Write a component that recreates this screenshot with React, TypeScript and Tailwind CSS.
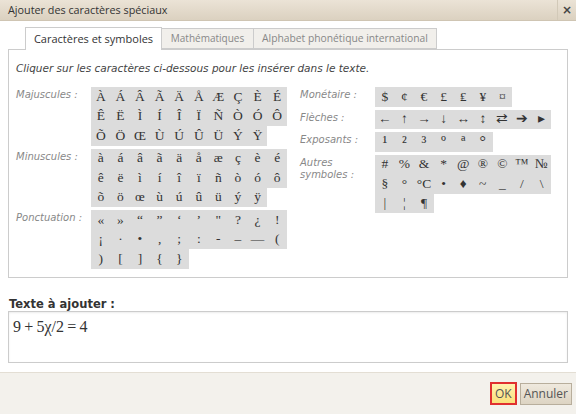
import React from 'react';

const upper = ['À','Á','Â','Ã','Ä','Å','Æ','Ç','È','É','Ê','Ë','Ì','Í','Î','Ï','Ñ','Ò','Ó','Ô','Õ','Ö','Œ','Ù','Ú','Û','Ü','Ý','Ÿ'];
const lower = ['à','á','â','ã','ä','å','æ','ç','è','é','ê','ë','ì','í','î','ï','ñ','ò','ó','ô','õ','ö','œ','ù','ú','û','ü','ý','ÿ'];
const punct = ['«','»','“','”','‘','’','"','?','¿','!','¡','·','•',',',';',':','-','–','—','(',')','[',']','{','}'];
const money = ['$','¢','€','£','₤','¥','¤'];
const arrows = ['←','↑','→','↓','↔','↕','⇄','➔','▸'];
const sup = ['¹','²','³','º','ª','°'];
const other = ['#','%','&','*','@','®','©','™','№','§','°','°C','•','♦','~','_','/','\\','|','¦','¶'];

function Grid({ chars, cols, small }: { chars: string[]; cols: number; small?: boolean }) {
  return (
    <div className="flex flex-wrap" style={{ width: cols * 19.6 }}>
      {chars.map((c, i) => (
        <span
          key={i}
          className={`w-[19.6px] h-[19.5px] bg-[#dcdcdc] flex items-center justify-center text-[#333] font-['Liberation_Serif',serif] cursor-pointer whitespace-nowrap ${small ? 'text-[16px]' : 'text-[13.5px]'}`}
        >
          {c}
        </span>
      ))}
    </div>
  );
}

function Section({ label, chars, cols, small }: { label: React.ReactNode; chars: string[]; cols: number; small?: boolean }) {
  return (
    <div className="flex">
      <div className="w-[75px] pt-[2px] text-[10px] leading-[12px] italic text-[#888]">{label}</div>
      <Grid chars={chars} cols={cols} small={small} />
    </div>
  );
}

export default function App() {
  return (
    <div className="w-[576px] h-[414px] bg-white flex flex-col font-['DejaVu_Sans',sans-serif] overflow-hidden">
      {/* Title bar */}
      <div className="h-[21px] flex items-center justify-between bg-gradient-to-b from-[#ebe3d6] to-[#dbd1c0] border-b border-[#cfc5b3]">
        <span className="pl-2 text-[10.8px] text-[#333] font-['Open_Sans',sans-serif]">Ajouter des caractères spéciaux</span>
        <span className="w-[19px] h-full flex items-center justify-center border-l border-[#d2c9b8] text-[12px] font-bold text-[#444]">×</span>
      </div>

      <div className="px-2 pt-[5px]">
        {/* Tabs */}
        <div className="flex pl-[17px] h-[23px] items-end font-['Open_Sans',sans-serif]">
          <div className="w-[137px] h-[23px] flex items-center justify-center bg-white border border-[#ccc] border-b-0 text-[11px] text-[#333] relative top-px">
            Caractères et symboles
          </div>
          <div className="w-[92px] h-[21px] flex items-center justify-center bg-[#f1efeb] border border-[#ccc] border-l-0 text-[10px] text-[#888]">
            Mathématiques
          </div>
          <div className="w-[183px] h-[21px] flex items-center justify-center bg-[#f1efeb] border border-[#ccc] border-l-0 text-[10.3px] text-[#888]">
            Alphabet phonétique international
          </div>
        </div>

        {/* Panel */}
        <div className="h-[229px] border border-[#ccc] px-[7px] pt-[12px]">
          <p className="text-[10.5px] leading-[13px] italic text-[#444]">
            Cliquer sur les caractères ci-dessous pour les insérer dans le texte.
          </p>
          <div className="flex mt-[12px]">
            <div className="w-[284px] flex flex-col gap-[3px]">
              <Section label="Majuscules :" chars={upper} cols={10} />
              <Section label="Minuscules :" chars={lower} cols={10} />
              <Section label="Ponctuation :" chars={punct} cols={10} />
            </div>
            <div className="flex flex-col gap-[3px]">
              <Section label="Monétaire :" chars={money} cols={9} />
              <Section label="Flèches :" chars={arrows} cols={9} />
              <Section label="Exposants :" chars={sup} cols={9} small />
              <Section label={<>Autres<br />symboles :</>} chars={other} cols={9} />
            </div>
          </div>
        </div>

        {/* Text to add */}
        <div className="mt-[19px] pl-px text-[11.5px] leading-[14px] font-bold text-[#333]">Texte à ajouter :</div>
        <div className="h-[52px] border border-[#ccc] shadow-[inset_0_1px_2px_rgba(0,0,0,0.08)] px-[4px] pt-[3px] text-[16px] text-[#333] font-['Liberation_Serif',serif]">
          9{'\u2009'}+{'\u2009'}5χ/2{'\u2009'}={'\u2009'}4
        </div>
      </div>

      {/* Footer */}
      <div className="mt-auto h-[42px] bg-[#f3f1ec] border-t border-[#e3ded4] flex items-center justify-end gap-[3px] pr-[4px] font-['Open_Sans',sans-serif] text-[12px]">
        <button className="h-[23px] px-[3px] bg-gradient-to-b from-[#fff3b0] to-[#fbe07a] border-2 border-[#e03030] text-[#555]">OK</button>
        <button className="h-[22px] px-[3px] bg-gradient-to-b from-[#efe9de] to-[#ddd4c3] border border-[#b8ae9c] text-[#555]">Annuler</button>
      </div>
    </div>
  );
}
